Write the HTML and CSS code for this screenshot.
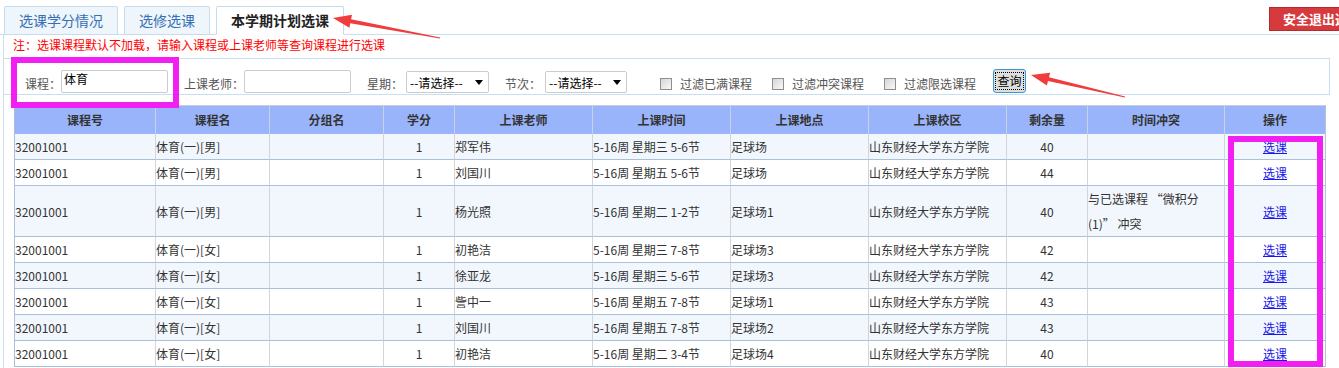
FILE: index.html
```html
<!DOCTYPE html>
<html>
<head>
<meta charset="utf-8">
<meta name="viewport" content="width=device-width, initial-scale=1">
<title>本学期计划选课</title>
<link rel="stylesheet" href="styles.css">
</head>
<body>
<!-- tabs + logout -->
<div class="topbar">
   <ul class="tabs">
      <li class="tab">选课学分情况</li>
      <li class="tab">选修选课</li>
      <li class="tab tab-on">本学期计划选课</li>
   </ul>
   <a class="logout" href="#">安全退出选课</a>
</div>

<div class="main">
   <p class="note">注：选课课程默认不加载，请输入课程或上课老师等查询课程进行选课</p>

   <!-- search panel -->
   <div class="filter">
      <span class="lbl lbl-first">课程：</span>
      <span class="inp">体育</span>
      <span class="lbl lbl-gap">上课老师：</span>
      <span class="inp"></span>
      <span class="lbl lbl-gap">星期：</span>
      <span class="sel sel-week">--请选择--<svg class="caret" width="8" height="5" viewBox="0 0 8 5"><path d="M0 0H8L4 5Z" fill="#000"/></svg></span>
      <span class="lbl lbl-gap">节次：</span>
      <span class="sel sel-part">--请选择--<svg class="caret" width="8" height="5" viewBox="0 0 8 5"><path d="M0 0H8L4 5Z" fill="#000"/></svg></span>
      <span class="chk chk-first"></span><span class="lbl">过滤已满课程</span>
      <span class="chk"></span><span class="lbl">过滤冲突课程</span>
      <span class="chk"></span><span class="lbl">过滤限选课程</span>
      <button class="btn-query"><span>查询</span></button>
   </div>

   <table class="CourseTable">
      <colgroup>
         <col style="width:141px"><col style="width:114px"><col style="width:114px"><col style="width:71px">
         <col style="width:138px"><col style="width:138px"><col style="width:138px"><col style="width:138px">
         <col style="width:81px"><col style="width:137px"><col style="width:101px">
      </colgroup>
      <tr>
         <th>课程号</th><th>课程名</th><th>分组名</th><th>学分</th><th>上课老师</th><th>上课时间</th>
         <th>上课地点</th><th>上课校区</th><th>剩余量</th><th>时间冲突</th><th>操作</th>
      </tr>
      <tbody id="courseBody"></tbody>
   </table>
</div>

<!-- annotations drawn over the page -->
<div class="mark mark-course"></div>
<div class="mark mark-op"></div>
<svg class="arrows" width="1339" height="368" viewBox="0 0 1339 368">
   <polygon fill="#f03c3c" points="333,18 352,14.8 351.1,19.3 440.1,37.4 439.9,38.6 350.3,23.3 349.4,27.8"/>
   <polygon fill="#f03c3c" points="1031,75 1050.1,72.8 1049,77.2 1125.1,96.4 1124.9,97.6 1048,81 1046.9,85.4"/>
</svg>

<script>
const courses = [
   ["郑军伟", "5-16周 星期三 5-6节", "足球场", "40", "", "男"],
   ["刘国川", "5-16周 星期五 5-6节", "足球场", "44", "", "男"],
   ["杨光照", "5-16周 星期二 1-2节", "足球场1", "40", "与已选课程 “微积分<br>(1)” 冲突", "男"],
   ["初艳洁", "5-16周 星期三 7-8节", "足球场3", "42", "", "女"],
   ["徐亚龙", "5-16周 星期三 5-6节", "足球场3", "42", "", "女"],
   ["訾中一", "5-16周 星期五 7-8节", "足球场1", "43", "", "女"],
   ["刘国川", "5-16周 星期五 7-8节", "足球场2", "43", "", "女"],
   ["初艳洁", "5-16周 星期二 3-4节", "足球场4", "40", "", "女"]
];

const body = document.getElementById("courseBody");
courses.forEach(function (c, i) {
   const row = document.createElement("tr");
   row.className = i % 2 === 0 ? "row-odd" : "row-even";
   row.innerHTML =
      "<td>32001001</td>" +
      "<td>体育(一)[" + c[5] + "]</td>" +
      "<td></td>" +
      "<td class='mid'>1</td>" +
      "<td>" + c[0] + "</td>" +
      "<td>" + c[1] + "</td>" +
      "<td>" + c[2] + "</td>" +
      "<td>山东财经大学东方学院</td>" +
      "<td class='mid'>" + c[3] + "</td>" +
      "<td>" + c[4] + "</td>" +
      "<td class='mid'><a href='#'>选课</a></td>";
   body.appendChild(row);
});
</script>
</body>
</html>
```

FILE: styles.css
```css
html,
body {
   margin: 0;
   padding: 0;
   height: 100%;
   overflow: hidden;
   font-size: 12px;
   font-family: "Noto Sans CJK SC", "Microsoft YaHei", sans-serif;
   color: #333;
   background: #fff;
}

/* ---------- top bar ---------- */
.topbar {
   display: flex;
   justify-content: space-between;
   align-items: flex-start;
   height: 35px;
   box-sizing: border-box;
   padding-left: 4px;
   border-bottom: 1px solid #c6e0f2;
}

.tabs {
   display: flex;
   gap: 6px;
   margin: 6px 0 0 0;
   padding: 0;
   list-style: none;
}

.tab {
   padding: 0 14px;
   line-height: 27px;
   font-size: 14px;
   color: #3470b5;
   background: #eef5fb;
   border: 1px solid #c6dcee;
   border-radius: 2px 2px 0 0;
}

.tab-on {
   color: #222;
   font-weight: bold;
   background: #fff;
   border-bottom-color: #fff;
}

.logout {
   margin-top: 7px;
   margin-right: -36px;
   padding: 0 13px;
   line-height: 22px;
   font-size: 13px;
   font-weight: bold;
   color: #fff;
   text-decoration: none;
   white-space: nowrap;
   background: #d63a3d;
   border: 1px solid #b52a2c;
}

/* ---------- main area ---------- */
.main {
   margin-left: 3px;
   border-left: 1px solid #cfe0ee;
   padding-bottom: 20px;
}

.note {
   margin: 0;
   padding-left: 9px;
   line-height: 20px;
   color: #f00;
}

.filter {
   display: flex;
   align-items: flex-end;
   height: 34px;
   margin: 3px 9px 0 0;
   padding-bottom: 1px;
   box-sizing: content-box;
   border: 1px solid #c6e0f2;
   border-left: none;
}

.lbl {
   line-height: 18px;
   color: #555;
   white-space: nowrap;
}

.lbl-first {
   margin-left: 21px;
}

.lbl-gap {
   margin-left: 16px;
}

.inp {
   width: 103px;
   height: 21px;
   padding-left: 2px;
   line-height: 16px;
   color: #000;
   border: 1px solid #ccc;
   border-radius: 2px;
}

.sel {
   display: flex;
   justify-content: space-between;
   align-items: center;
   height: 20px;
   margin-left: 3px;
   padding: 0 5px 0 3px;
   color: #000;
   border: 1px solid #ccc;
   border-radius: 2px;
   box-sizing: content-box;
}

.sel-week {
   width: 73px;
}

.sel-part {
   width: 72px;
   margin-left: 4px;
}

.chk {
   width: 10px;
   height: 10px;
   margin: 0 8px 3px 20px;
   border: 1px solid #8e8e8e;
   background: linear-gradient(135deg, #d6d6d6, #f8f8f8);
}

.chk-first {
   margin-left: 33px;
}

.btn-query {
   width: 33px;
   height: 24px;
   margin-left: 17px;
   padding: 2px;
   font-family: inherit;
   font-size: 12px;
   color: #000;
   background: #dedede;
   border: 1px solid #3a98d6;
   border-radius: 3px;
}

.btn-query span {
   display: block;
   line-height: 16px;
   outline: 1px dotted #000;
}

/* ---------- course table ---------- */
.CourseTable {
   table-layout: fixed;
   width: 1312px;
   margin: 10px 0 0 10px;
   border-collapse: separate;
   border-spacing: 0;
   border-left: 1px solid #a9c0dc;
}

.CourseTable th {
   padding: 0;
   line-height: 28px;
   font-weight: bold;
   color: #333;
   background: #99b4fb;
   border-top: 1px solid #c8ced8;
   border-right: 1px solid #c9d2e2;
}

.CourseTable td {
   padding: 0;
   line-height: 25px;
   white-space: nowrap;
   vertical-align: middle;
   border-right: 1px solid #d2d6dc;
   border-bottom: 1px solid #a9c0dc;
}

.CourseTable td:last-child,
.CourseTable th:last-child {
   border-right-color: #b6c2d0;
}

.CourseTable .mid {
   text-align: center;
}

.row-odd td {
   background: #f2f7fd;
}

.row-even td {
   background: #fff;
}

.CourseTable a {
   color: #1818e8;
   text-decoration: underline;
}

/* ---------- annotations ---------- */
.mark {
   position: absolute;
   border: 6px solid #f21ff2;
   box-sizing: border-box;
}

.mark-course {
   left: 11px;
   top: 57px;
   width: 168px;
   height: 51px;
}

.mark-op {
   left: 1228px;
   top: 136px;
   width: 95px;
   height: 231px;
}

.arrows {
   position: absolute;
   left: 0;
   top: 0;
   pointer-events: none;
}
```
